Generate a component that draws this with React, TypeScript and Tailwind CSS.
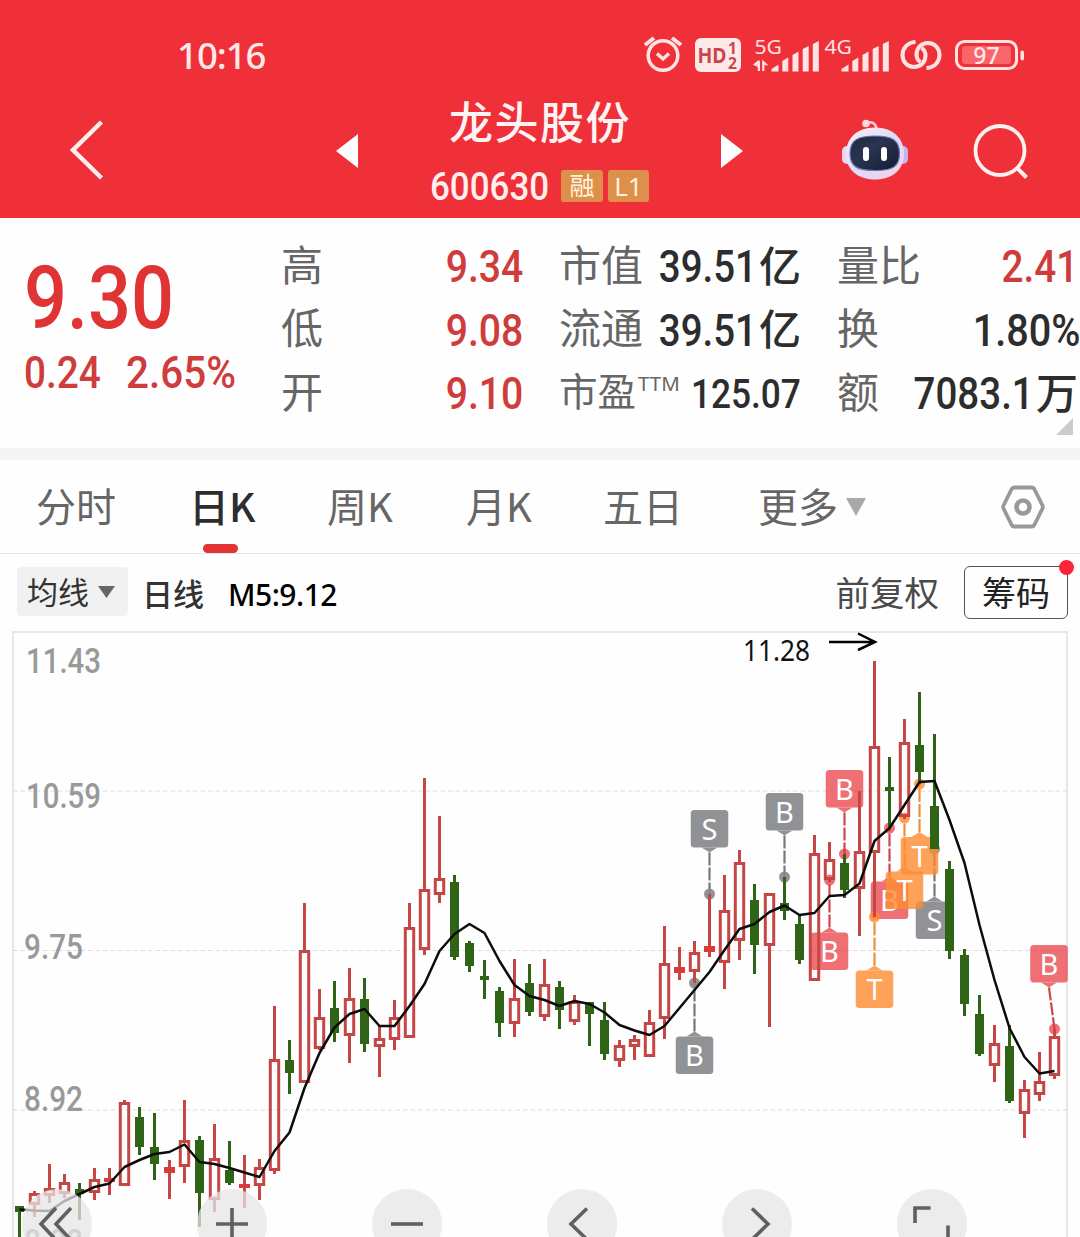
import type { ReactNode } from 'react';
import clsx from 'clsx';

type Tone = 'red' | 'orange' | 'gray';

interface Candle {
  up: boolean;
  high: number;
  top: number;
  bottom: number;
  low: number;
}

interface Marker {
  label: string;
  tone: Tone;
  x: number;
  boxTop: number;
  dotY: number;
  dotX?: number;
}

const CHART_TOP = 620;
const STEP = 15;
const FIRST_X = 19.5;

// [up, high, bodyTop, bodyBottom, low]
const RAW_CANDLES: [number, number, number, number, number][] = [
  [0, 1206, 1206, 1212, 1250],
  [1, 1191, 1193, 1205, 1217],
  [1, 1164, 1188, 1196, 1203],
  [1, 1174, 1182, 1194, 1198],
  [0, 1183, 1189, 1194, 1220],
  [1, 1168, 1179, 1193, 1200],
  [1, 1168, 1178, 1182, 1195],
  [1, 1100, 1102, 1186, 1186],
  [0, 1107, 1117, 1147, 1155],
  [0, 1113, 1147, 1164, 1180],
  [1, 1160, 1167, 1173, 1199],
  [1, 1100, 1140, 1167, 1183],
  [0, 1136, 1140, 1193, 1227],
  [1, 1124, 1158, 1200, 1212],
  [0, 1141, 1170, 1183, 1185],
  [1, 1155, 1184, 1188, 1208],
  [1, 1159, 1167, 1186, 1200],
  [1, 1006, 1059, 1171, 1174],
  [0, 1040, 1060, 1073, 1094],
  [1, 903, 950, 1083, 1083],
  [1, 989, 1017, 1049, 1050],
  [0, 981, 1008, 1033, 1042],
  [1, 968, 998, 1036, 1063],
  [0, 978, 999, 1044, 1052],
  [1, 1025, 1038, 1047, 1077],
  [1, 1000, 1017, 1040, 1050],
  [1, 903, 927, 1038, 1038],
  [1, 778, 889, 950, 955],
  [1, 816, 878, 895, 903],
  [0, 875, 882, 957, 960],
  [0, 941, 943, 966, 972],
  [0, 960, 976, 980, 999],
  [0, 987, 991, 1023, 1037],
  [1, 959, 998, 1024, 1037],
  [0, 964, 983, 1012, 1016],
  [1, 959, 984, 1017, 1021],
  [0, 981, 987, 1010, 1029],
  [1, 995, 1001, 1022, 1025],
  [0, 1002, 1002, 1014, 1046],
  [0, 1002, 1020, 1054, 1060],
  [1, 1040, 1045, 1061, 1067],
  [1, 1035, 1039, 1047, 1060],
  [1, 1010, 1022, 1057, 1057],
  [1, 926, 963, 1019, 1039],
  [1, 947, 967, 973, 980],
  [1, 941, 952, 972, 983],
  [1, 894, 946, 952, 957],
  [1, 875, 910, 963, 989],
  [1, 850, 862, 941, 960],
  [0, 884, 900, 945, 974],
  [1, 893, 893, 946, 1027],
  [0, 877, 903, 911, 920],
  [0, 915, 924, 960, 964],
  [1, 835, 853, 981, 981],
  [1, 842, 859, 880, 882],
  [0, 854, 863, 890, 898],
  [1, 791, 851, 889, 936],
  [1, 661, 746, 853, 917],
  [0, 757, 787, 791, 828],
  [1, 719, 742, 817, 819],
  [0, 692, 745, 772, 784],
  [0, 734, 806, 849, 849],
  [0, 861, 869, 951, 959],
  [0, 949, 955, 1004, 1016],
  [0, 995, 1014, 1054, 1056],
  [1, 1025, 1043, 1066, 1082],
  [0, 1025, 1046, 1101, 1103],
  [1, 1080, 1089, 1114, 1138],
  [1, 1052, 1081, 1095, 1101],
  [1, 1029, 1036, 1076, 1079],
];

const CANDLES: Candle[] = RAW_CANDLES.map(([up, high, top, bottom, low]) => ({
  up: up === 1,
  high,
  top,
  bottom,
  low,
}));

const MA5 = [
  1209.5, 1210.5, 1211, 1201, 1194, 1187, 1183.5, 1167, 1160, 1154, 1152, 1144.5, 1162, 1164, 1168,
  1172.5, 1177, 1151, 1132.5, 1088, 1053, 1027.5, 1014, 1009, 1026, 1026, 1006, 984, 951, 934, 924,
  933, 961, 985, 996, 1000, 1006, 1001, 1004, 1012.5, 1025, 1030.5, 1035, 1026, 1008, 990, 972, 950,
  929, 924, 912, 905.5, 915, 913, 896, 895, 883.5, 841, 828, 805, 782, 781, 820, 863, 925, 980, 1028,
  1057, 1073.5, 1071,
];

const MARKERS: Marker[] = [
  { label: 'S', tone: 'gray', x: 709.5, boxTop: 810, dotY: 894 },
  { label: 'B', tone: 'gray', x: 784.5, boxTop: 793, dotY: 877 },
  { label: 'B', tone: 'red', x: 844.5, boxTop: 770, dotY: 854 },
  { label: 'B', tone: 'gray', x: 694.5, boxTop: 1036.5, dotY: 983 },
  { label: 'B', tone: 'red', x: 829.5, boxTop: 932.5, dotY: 880 },
  { label: 'B', tone: 'red', x: 889.5, boxTop: 881.5, dotY: 828 },
  { label: 'S', tone: 'gray', x: 934.5, boxTop: 901.5, dotY: 849 },
  { label: 'T', tone: 'orange', x: 904.5, boxTop: 871.5, dotY: 818 },
  { label: 'T', tone: 'orange', x: 919.5, boxTop: 837, dotY: 784 },
  { label: 'T', tone: 'orange', x: 874.5, boxTop: 970.5, dotY: 917 },
  { label: 'B', tone: 'red', x: 1049, boxTop: 945, dotX: 1054.5, dotY: 1029 },
];

const TONES: Record<Tone, { box: string; line: string; opacity: number }> = {
  red: { box: '#e8333a', line: '#c9494d', opacity: 0.7 },
  orange: { box: '#ff8c32', line: '#ef8f3c', opacity: 0.8 },
  gray: { box: '#86878a', line: '#77787a', opacity: 0.9 },
};

const AXIS = [
  { text: '11.43', x: 26, y: 673, w: 75 },
  { text: '10.59', x: 26, y: 808, w: 75 },
  { text: '9.75', x: 24, y: 959, w: 59 },
  { text: '8.92', x: 24, y: 1111, w: 59 },
  { text: '8.08', x: 24, y: 1254, w: 59 },
];

const TABS = [
  { label: '分时', className: 'ml-[36px] w-[153px]' },
  { label: '日K', className: 'w-[138px]', active: true },
  { label: '周K', className: 'w-[139px]' },
  { label: '月K', className: 'w-[137px]' },
  { label: '五日', className: 'w-[155px]' },
];

const MarkerFlag = ({ marker }: { marker: Marker }) => {
  const { label, tone, x, boxTop, dotY } = marker;
  const { box, line, opacity } = TONES[tone];
  const dotX = marker.dotX ?? x;
  const below = boxTop > dotY;
  const edge = below ? boxTop : boxTop + 37.5;
  const tip = below ? edge - 5 : edge + 5;
  return (
    <g>
      <line x1={x} y1={tip} x2={dotX} y2={dotY} stroke={line} strokeWidth="2.2" strokeDasharray="13 2" />
      <circle cx={dotX} cy={dotY} r="5.5" fill={box} opacity={opacity} />
      <g opacity={opacity}>
        <rect x={x - 18.75} y={boxTop} width="37.5" height="37.5" rx="3.5" fill={box} />
        <path d={`M${x - 8} ${edge}L${x} ${tip}L${x + 8} ${edge}Z`} fill={box} />
      </g>
      <text x={x} y={boxTop + 29.5} textAnchor="middle" fontSize="29" fill="#fff">
        {label}
      </text>
    </g>
  );
};

const CandleBar = ({ candle, x }: { candle: Candle; x: number }) => {
  const { up, high, top, bottom, low } = candle;
  if (!up) {
    return (
      <g fill="#2f6315">
        <rect x={x - 1.5} y={high} width="3" height={low - high} />
        <rect x={x - 4.5} y={top} width="9" height={bottom - top} />
      </g>
    );
  }
  const solid = bottom - top <= 6;
  return (
    <g fill="#c64545">
      <rect x={x - 1.5} y={high} width="3" height={top - high + 1} />
      <rect x={x - 1.5} y={bottom - 1} width="3" height={Math.max(low - bottom + 1, 0)} />
      {solid ? (
        <rect x={x - 5.5} y={top} width="11" height={bottom - top} fill="#d93a3a" />
      ) : (
        <rect x={x - 4.2} y={top + 1.5} width="8.4" height={bottom - top - 3} fill="none" stroke="#c64545" strokeWidth="3" />
      )}
    </g>
  );
};

const KLineChart = () => (
  <svg
    width="1080"
    height="617"
    viewBox={`0 ${CHART_TOP} 1080 617`}
    className="block font-['Noto_Sans',sans-serif]"
  >
    <path d="M13 1240V632H1067V1240" fill="none" stroke="#e6e6e6" strokeWidth="2" />
    {[791, 950.5, 1110].map((y) => (
      <line key={y} x1="13" x2="1067" y1={y} y2={y} stroke="#dcdcdc" strokeWidth="1.2" strokeDasharray="4.5 3" />
    ))}
    {AXIS.map((a) => (
      <text
        key={a.text}
        x={a.x}
        y={a.y}
        textLength={a.w}
        lengthAdjust="spacingAndGlyphs"
        fontSize="35"
        fill="#999"
        className="font-[Roboto,sans-serif] font-medium"
      >
        {a.text}
      </text>
    ))}
    {MARKERS.map((m) => (
      <MarkerFlag key={`${m.x}-${m.boxTop}`} marker={m} />
    ))}
    {CANDLES.map((c, i) => (
      <CandleBar key={i} candle={c} x={FIRST_X + i * STEP} />
    ))}
    <polyline
      points={MA5.map((y, i) => `${FIRST_X + i * STEP},${y}`).join(' ')}
      fill="none"
      stroke="#0c0c0c"
      strokeWidth="2.5"
      strokeLinejoin="round"
    />
    <text x="743" y="661" fontSize="29.5" textLength="67" lengthAdjust="spacingAndGlyphs" fill="#111">
      11.28
    </text>
    <path d="M829 642H874M858 633.5L875 642L858 650" fill="none" stroke="#000" strokeWidth="2.5" />
  </svg>
);

const ChartButton = ({ children }: { children: ReactNode }) => (
  <button className="size-[70px] shrink-0 rounded-full bg-[#e6e6e6]/75">
    <svg width="70" height="70" viewBox="0 0 70 70" fill="none" stroke="#606060" strokeWidth="3.6">
      {children}
    </svg>
  </button>
);

const SignalBars = ({ network, transfer }: { network: string; transfer?: boolean }) => (
  <svg width="66" height="48" viewBox="0 -7 66 48">
    <text
      x="1.5"
      y="16.5"
      fontSize="20"
      textLength="27.5"
      lengthAdjust="spacingAndGlyphs"
      fill="#ffe3e3"
      className="font-['Noto_Sans',sans-serif]"
    >
      {network}
    </text>
    {transfer && (
      <g fill="#ffe3e3">
        <path d="M4.800 23.500H7V34H4.800V30L0 27.800Z" />
        <path d="M9.200 34H11.400V28L15.500 28.500L9.200 22.500Z" />
      </g>
    )}
    <g fill="#ffe3e3">
      <path d="M18.500 34.500V32L25.500 27.500V34.500Z" />
      <path d="M29.300 34.500V24L35.300 20.500V34.500Z" />
      <path d="M39.500 34.500V18L45.500 14.500V34.500Z" />
      <path d="M49.700 34.500V12L55.700 9V34.500Z" />
      <path d="M59.800 34.500V7L65.800 4V34.500Z" />
    </g>
  </svg>
);

const StatusBar = () => (
  <div className="flex h-[88px] items-start pt-[36px] text-[#ffe8e8]">
    <span className="-mt-[5px] ml-[177px] font-['Noto_Sans',sans-serif] text-[36.500px] font-medium leading-[48px] tracking-[-1px]">
      10:16
    </span>
    <div className="ml-auto mr-[55px] flex h-9 items-center">
      <svg width="40" height="38" viewBox="0 0 40 38" fill="none" stroke="#ffe3e3" strokeWidth="3.500">
        <circle cx="20" cy="20.500" r="14.800" />
        <path d="M14 18.500L20 24L26 18.500" />
        <path d="M2 10L11 3M29 3L38 10" strokeWidth="4" />
      </svg>
      <svg width="46" height="34" viewBox="0 0 46 34" className="ml-3 mt-[2px] font-['Noto_Sans',sans-serif] font-bold">
        <rect width="46" height="34" rx="6" fill="#ffe8e8" />
        <text x="2.500" y="24.500" fontSize="21" textLength="29" lengthAdjust="spacingAndGlyphs" fill="#c9474c">
          HD
        </text>
        <text x="33" y="16" fontSize="15.500" fill="#c9474c">
          1
        </text>
        <text x="33" y="30.500" fontSize="15.500" fill="#c9474c">
          2
        </text>
      </svg>
      <div className="ml-3">
        <SignalBars network="5G" transfer />
      </div>
      <div className="ml-[4px]">
        <SignalBars network="4G" />
      </div>
      <svg width="42" height="32" viewBox="0 0 42 32" className="ml-[11px] mt-[2px]" fill="none" stroke="#ffe3e3" strokeWidth="4">
        <path d="M15.500 3C7 3.500 2.500 9.500 2.500 16C2.500 23 7.500 28 14 28C21 28 25.500 23 25.500 16.500C25.500 13 24 10.500 21.500 9" />
        <path d="M26.500 29C35 28.500 39.500 22.500 39.500 16C39.500 9 34.500 4 28 4C21 4 16.500 9 16.500 15.500C16.500 19 18 21.500 20.500 23" />
      </svg>
      <svg width="70" height="30" viewBox="0 0 70 30" className="ml-[13px] mt-[2px]">
        <rect x="1.500" y="1.500" width="60" height="27" rx="8" fill="none" stroke="#ffe3e3" strokeWidth="3" />
        <rect x="7" y="6" width="49" height="18" rx="3" fill="#fb6469" />
        <rect x="65.500" y="10.500" width="3.500" height="10" rx="1.700" fill="#ffe3e3" />
        <text x="31.500" y="23.500" fontSize="23" textAnchor="middle" fill="#ffe8e8" className="font-['Noto_Sans',sans-serif] font-medium">
          97
        </text>
      </svg>
    </div>
  </div>
);

const RobotIcon = () => (
  <svg width="68" height="62" viewBox="0 0 68 62">
    <defs>
      <linearGradient id="shell" x1="0" y1="0" x2="1" y2="1">
        <stop offset="0" stopColor="#fdeef3" />
        <stop offset="0.5" stopColor="#dcdcf8" />
        <stop offset="1" stopColor="#f6d2e6" />
      </linearGradient>
      <linearGradient id="visor" x1="0" y1="0" x2="1" y2="1">
        <stop offset="0" stopColor="#1b2740" />
        <stop offset="0.4" stopColor="#2b3450" />
        <stop offset="1" stopColor="#141c33" />
      </linearGradient>
    </defs>
    <path d="M25 4C31 2 35 4.500 35.500 10" fill="none" stroke="#f9c9d4" strokeWidth="2.500" />
    <circle cx="25" cy="4.500" r="3.800" fill="#fbd9e0" />
    <rect x="1" y="27" width="10" height="18" rx="5" fill="#e9d5f2" />
    <rect x="57" y="27" width="10" height="18" rx="5" fill="#c3b6f0" />
    <path d="M34 8.500C53 8.500 63 20 63 35C63 51 51 60.500 34 60.500C17 60.500 5 51 5 35C5 20 15 8.500 34 8.500Z" fill="url(#shell)" />
    <path d="M34 17C52 17 58.500 21.500 58.500 34.500C58.500 47.500 52 51.500 34 51.500C16 51.500 9 47.500 9 34.500C9 21.500 16 17 34 17Z" fill="url(#visor)" stroke="#6f78b8" strokeWidth="1.200" />
    <rect x="22" y="28" width="6" height="14" rx="3" fill="#fff" />
    <rect x="40" y="28" width="6" height="14" rx="3" fill="#fff" />
  </svg>
);

const TitleBar = () => (
  <div className="flex h-[130px] items-start">
    <svg width="36" height="60" viewBox="0 0 36 60" className="ml-[69px] mt-[32px]" fill="none" stroke="#fff0f0" strokeWidth="4.500">
      <path d="M32.500 2L4 30L32.500 58" />
    </svg>
    <svg width="22" height="34" viewBox="0 0 22 34" className="ml-[231px] mt-[46px]">
      <path d="M22 0V34L0 17Z" fill="#fff" />
    </svg>
    <div className="ml-[60px] flex w-[244px] flex-col items-center">
      <h1 className="mt-[4px] text-[44px] font-medium leading-[56px] tracking-[1.500px] text-[#fff3f3]">龙头股份</h1>
      <div className="mt-[16px] flex h-[44px] w-full items-center">
        <span className="ml-[12px] mt-[2px] w-[131px] origin-left scale-x-[0.920] font-[Roboto,sans-serif] text-[38px] font-medium leading-none text-[#ffeeee]">
          600630
        </span>
        <span className="-mt-px flex h-8 w-[42px] items-center justify-center rounded-[3px] bg-[#df8f4c] pb-[3px] text-[25px] leading-none text-[#fff3dc]">
          融
        </span>
        <span className="-mt-px ml-[5px] flex h-8 w-[41px] items-center justify-center rounded-[3px] bg-[#df8f4c] font-['Noto_Sans',sans-serif] text-[26px] leading-none text-[#fff3dc]">
          L1
        </span>
      </div>
    </div>
    <svg width="22" height="34" viewBox="0 0 22 34" className="ml-[59px] mt-[46px]">
      <path d="M0 0V34L22 17Z" fill="#fff" />
    </svg>
    <div className="ml-[98px] mt-[31px]">
      <RobotIcon />
    </div>
    <svg width="56" height="58" viewBox="0 0 56 58" className="ml-[64px] mt-[35px]" fill="none" stroke="#fff0f0" strokeWidth="3.800">
      <circle cx="27" cy="27.500" r="24.500" />
      <path d="M44 45L53.500 54.500" strokeWidth="4" />
    </svg>
  </div>
);

const Num = ({ children, className, size = 'text-[43.500px]' }: { children: ReactNode; className?: string; size?: string }) => (
  <span className={clsx('mt-[3px] font-[Roboto,sans-serif] font-medium leading-none', size, className)}>{children}</span>
);

const Unit = ({ children }: { children: ReactNode }) => (
  <span className="mb-[5px] ml-[2px] text-[42px] font-medium leading-none">{children}</span>
);

const Cell = ({ label, children }: { label: ReactNode; children: ReactNode }) => (
  <div className="flex h-[63.300px] items-center justify-between whitespace-nowrap">
    <span className="mb-[7px] text-[42px] leading-none text-[#666]">{label}</span>
    {children}
  </div>
);

const QuotePanel = () => (
  <section className="flex h-[230px] pt-[17px]">
    <div className="w-[281px] pl-[24px] text-[#e03434]">
      <div className="mt-[19px] origin-left scale-x-[0.860] font-[Roboto,sans-serif] text-[88px] font-medium leading-[88px]">
        9.30
      </div>
      <div className="mt-[7px] flex text-[#cf3c3c]">
        <Num className="w-[102px] origin-left scale-x-[0.890]">0.24</Num>
        <Num className="origin-left scale-x-[0.930]">2.65%</Num>
      </div>
    </div>
    <div className="w-[242px] text-[#cf3c3c]">
      <Cell label="高">
        <Num className="origin-right scale-x-[0.900]">9.34</Num>
      </Cell>
      <Cell label="低">
        <Num className="origin-right scale-x-[0.900]">9.08</Num>
      </Cell>
      <Cell label="开">
        <Num className="origin-right scale-x-[0.900]">9.10</Num>
      </Cell>
    </div>
    <div className="ml-[36px] w-[242px] text-[#2d2d2d]">
      {['市值', '流通'].map((label) => (
        <Cell key={label} label={label}>
          <span className="flex items-center">
            <Num className="-ml-4 origin-right scale-x-[0.885]">39.51</Num>
            <Unit>亿</Unit>
          </span>
        </Cell>
      ))}
      <Cell
        label={
          <span className="flex items-start text-[38.500px]">
            市盈
            <sup className="top-0 ml-[2px] mt-[3px] font-['Noto_Sans',sans-serif] text-[20.500px] leading-none">TTM</sup>
          </span>
        }
      >
        <Num size="text-[41px]" className="-ml-8 origin-right scale-x-[0.860]">
          125.07
        </Num>
      </Cell>
    </div>
    <div className="relative ml-[36px] w-[241px] text-[#2d2d2d]">
      <Cell label="量比">
        <Num className="origin-right scale-x-[0.890] text-[#cf3c3c]">2.41</Num>
      </Cell>
      <Cell label="换">
        <Num className="-mr-[2px] origin-right scale-x-[0.910]">1.80%</Num>
      </Cell>
      <Cell label="额">
        <span className="flex items-center">
          <Num className="-ml-4 origin-right scale-x-[0.885]">7083.1</Num>
          <Unit>万</Unit>
        </span>
      </Cell>
      <svg width="17" height="17" viewBox="0 0 17 17" className="absolute right-[5px] top-[183px]">
        <path d="M17 0V17H0Z" fill="#ccc" />
      </svg>
    </div>
  </section>
);

const PeriodTabs = () => (
  <nav className="flex h-[94px] items-center border-b border-[#e6e6e6] text-[40px] leading-none text-[#666]">
    {TABS.map((tab) => (
      <div
        key={tab.label}
        className={clsx(
          'relative flex h-full items-center whitespace-nowrap pb-[4px]',
          tab.className,
          tab.active && 'font-medium text-[#2d2d2d]'
        )}
      >
        {tab.label}
        {tab.active && <span className="absolute bottom-0 left-[14px] h-[9px] w-[35px] rounded-full bg-[#e03434]" />}
      </div>
    ))}
    <span className="whitespace-nowrap pb-[4px]">更多</span>
    <svg width="20" height="18" viewBox="0 0 20 18" className="ml-[8px]">
      <path d="M0 0H20L10 18Z" fill="#a9a9a9" />
    </svg>
    <svg width="44" height="44" viewBox="0 0 44 44" className="ml-auto mr-[35px]" fill="none" stroke="#999" strokeWidth="3.800">
      <path d="M13 2.500H31Q32.500 2.500 33.300 4L41.500 20.500Q42.200 22 41.500 23.500L33.300 40Q32.500 41.500 31 41.500H13Q11.500 41.500 10.700 40L2.500 23.500Q1.800 22 2.500 20.500L10.700 4Q11.500 2.500 13 2.500Z" />
      <circle cx="22" cy="22" r="6.500" strokeWidth="4.500" />
    </svg>
  </nav>
);

const IndicatorRow = () => (
  <div className="flex h-[66px] items-center whitespace-nowrap pt-[11px] leading-none">
    <div className="-mt-[2px] ml-[17px] flex h-[49px] w-[111px] items-center rounded bg-[#f1f1f1] pl-[10px] text-[31px] text-[#333]">
      <span className="mb-[3px]">均线</span>
      <svg width="17" height="12" viewBox="0 0 17 12" className="ml-[9px]">
        <path d="M0 0H17L8.500 12Z" fill="#666" />
      </svg>
    </div>
    <span className="mb-px ml-[14px] text-[31px] font-medium text-[#333]">日线</span>
    <span className="ml-[24px] mt-[4px] font-['Noto_Sans',sans-serif] text-[30px] font-medium tracking-[-0.500px] text-black">
      M5:9.12
    </span>
    <span className="mb-[3px] ml-auto text-[34.500px] text-[#4a4a4a]">前复权</span>
    <div className="relative ml-[25px] mr-[12px] flex h-[53px] w-[104px] items-center justify-center rounded-[6px] border border-[#555] pb-[2px] text-[34px] text-[#222]">
      筹码
      <span className="absolute -right-[7px] -top-[7px] size-[15px] rounded-full bg-[#fc2538]" />
    </div>
  </div>
);

const App = () => (
  <div className="h-[1237px] w-[1080px] overflow-hidden bg-[#fefefe] font-['Noto_Sans_CJK_SC',sans-serif]">
    <header className="h-[218px] bg-[#ef3038]">
      <StatusBar />
      <TitleBar />
    </header>
    <QuotePanel />
    <div className="h-3 bg-[#f4f4f4]" />
    <PeriodTabs />
    <IndicatorRow />
    <div className="relative">
      <KLineChart />
      {/* Floating chart controls */}
      <div className="absolute left-[22px] top-[569px] flex gap-[105px]">
        <ChartButton>
          <path d="M34 19L19 35L34 51M49 19L34 35L49 51" />
        </ChartButton>
        <ChartButton>
          <path d="M35 19V51M19 35H51" />
        </ChartButton>
        <ChartButton>
          <path d="M19 35H51" />
        </ChartButton>
        <ChartButton>
          <path d="M40 19.500L24 35L40 50.500" />
        </ChartButton>
        <ChartButton>
          <path d="M30 19.500L46 35L30 50.500" />
        </ChartButton>
        <ChartButton>
          <path d="M18 34V19H33.500M51 36.500V52H36" />
        </ChartButton>
      </div>
    </div>
  </div>
);

export default App;
